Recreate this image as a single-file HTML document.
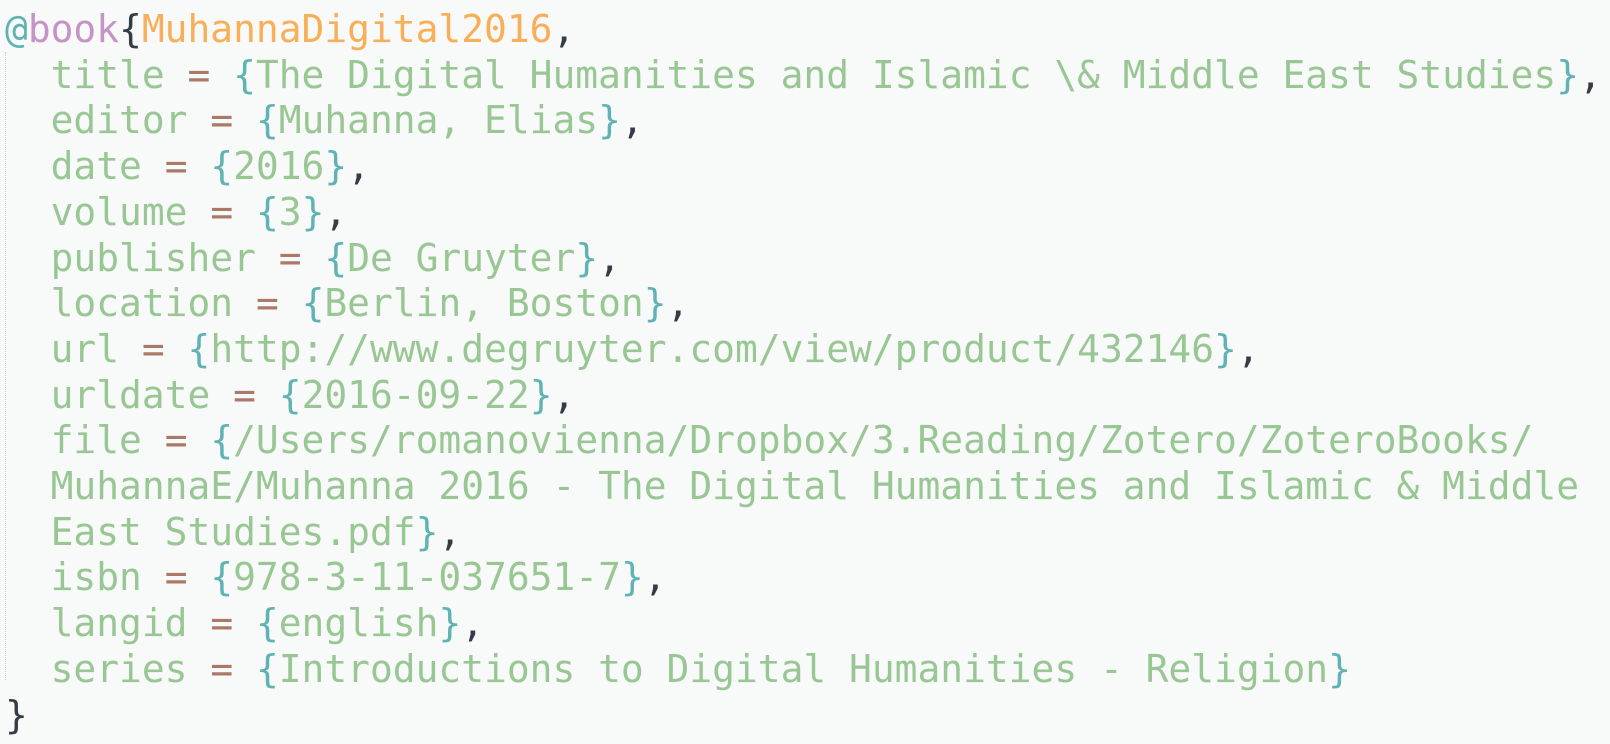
<!DOCTYPE html>
<html><head><meta charset="utf-8"><style>
html,body{margin:0;padding:0;background:#f8f9f9;width:1610px;height:744px;overflow:hidden}
pre{margin:0;position:absolute;left:5px;top:7px;font-family:"DejaVu Sans Mono","Liberation Mono",monospace;font-size:37.9px;line-height:45.7px;color:#99c794}
.g{position:absolute;left:5px;top:52px;height:628px;border-left:1px dotted #ccc}
.at{color:#5fb3b3}.p{color:#c594c5}.o{color:#f9ae58}.d{color:#343d46}.b{color:#5fb3b3}.e{color:#ab7967}
</style></head><body>
<div class="g"></div>
<pre><span class="at">@</span><span class="p">book</span><span class="d">{</span><span class="o">MuhannaDigital2016</span><span class="d">,</span>
  title <span class="e">=</span> <span class="b">{</span>The Digital Humanities and Islamic \&amp; Middle East Studies<span class="b">}</span><span class="d">,</span>
  editor <span class="e">=</span> <span class="b">{</span>Muhanna, Elias<span class="b">}</span><span class="d">,</span>
  date <span class="e">=</span> <span class="b">{</span>2016<span class="b">}</span><span class="d">,</span>
  volume <span class="e">=</span> <span class="b">{</span>3<span class="b">}</span><span class="d">,</span>
  publisher <span class="e">=</span> <span class="b">{</span>De Gruyter<span class="b">}</span><span class="d">,</span>
  location <span class="e">=</span> <span class="b">{</span>Berlin, Boston<span class="b">}</span><span class="d">,</span>
  url <span class="e">=</span> <span class="b">{</span>http://www.degruyter.com/view/product/432146<span class="b">}</span><span class="d">,</span>
  urldate <span class="e">=</span> <span class="b">{</span>2016-09-22<span class="b">}</span><span class="d">,</span>
  file <span class="e">=</span> <span class="b">{</span>/Users/romanovienna/Dropbox/3.Reading/Zotero/ZoteroBooks/
  MuhannaE/Muhanna 2016 - The Digital Humanities and Islamic &amp; Middle
  East Studies.pdf<span class="b">}</span><span class="d">,</span>
  isbn <span class="e">=</span> <span class="b">{</span>978-3-11-037651-7<span class="b">}</span><span class="d">,</span>
  langid <span class="e">=</span> <span class="b">{</span>english<span class="b">}</span><span class="d">,</span>
  series <span class="e">=</span> <span class="b">{</span>Introductions to Digital Humanities - Religion<span class="b">}</span>
<span class="d">}</span></pre>
</body></html>
